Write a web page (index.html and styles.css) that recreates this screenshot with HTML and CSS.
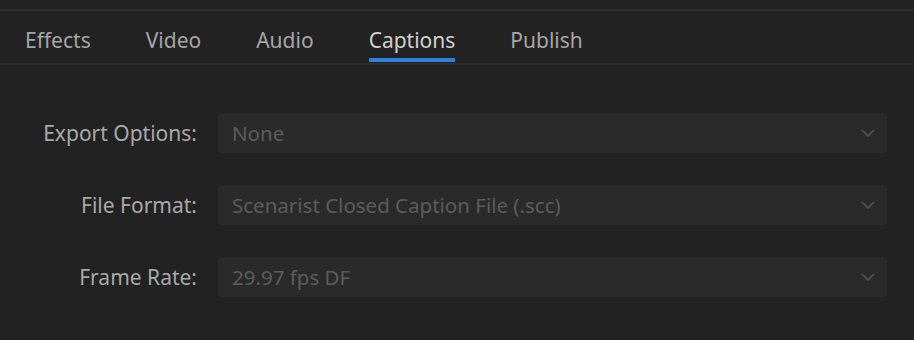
FILE: index.html
```html
<!DOCTYPE html>
<html lang="en">
<head>
    <meta charset="UTF-8">
    <title>Export Settings - Captions</title>
    <link rel="stylesheet" href="styles.css">
</head>
<body>
    <div class="panel">
        <div class="tabs">
            <div class="tab">Effects</div>
            <div class="tab">Video</div>
            <div class="tab">Audio</div>
            <div class="tab active">Captions</div>
            <div class="tab">Publish</div>
        </div>
        <div class="form">
            <div class="row">
                <label>Export Options:</label>
                <div class="select">
                    <span>None</span>
                    <svg class="chevron" width="14" height="8" viewBox="0 0 14 8"><path d="M1 1 L7 7 L13 1" fill="none" stroke="#555" stroke-width="1.6"/></svg>
                </div>
            </div>
            <div class="row">
                <label>File Format:</label>
                <div class="select">
                    <span>Scenarist Closed Caption File (.scc)</span>
                    <svg class="chevron" width="14" height="8" viewBox="0 0 14 8"><path d="M1 1 L7 7 L13 1" fill="none" stroke="#555" stroke-width="1.6"/></svg>
                </div>
            </div>
            <div class="row">
                <label>Frame Rate:</label>
                <div class="select">
                    <span>29.97 fps DF</span>
                    <svg class="chevron" width="14" height="8" viewBox="0 0 14 8"><path d="M1 1 L7 7 L13 1" fill="none" stroke="#555" stroke-width="1.6"/></svg>
                </div>
            </div>
        </div>
    </div>
</body>
</html>
```

FILE: styles.css
```css
body {
    margin: 0;
    background: #222222;
    font-family: 'Noto Sans', 'Open Sans', sans-serif;
    color: #a8a8a8;
}
.panel {
    padding-top: 9px;
}
.tabs {
    display: flex;
    gap: 55px;
    height: 52px;
    padding-left: 25px;
    border-top: 2px solid #2e2e2e;
    border-bottom: 2px solid #2e2e2e;
}
.tab {
    font-size: 21px;
    line-height: 46px;
    padding-top: 6px;
    color: #a6a6a6;
    position: relative;
}
.tab.active {
    color: #d0d0d0;
}
.tab.active::after {
    content: "";
    position: absolute;
    left: 0;
    right: 0;
    bottom: 1px;
    height: 4px;
    background: #2d7fe0;
}
.form {
    padding: 48px 27px 0 0;
    display: flex;
    flex-direction: column;
    gap: 32px;
}
.row {
    display: flex;
    align-items: center;
}
.row label {
    width: 197px;
    text-align: right;
    font-size: 21px;
    color: #a9a9a9;
    margin-right: 21px;
}
.select {
    flex: 1;
    height: 40px;
    background: #2a2a2a;
    border-radius: 4px;
    display: flex;
    align-items: center;
    justify-content: space-between;
    padding: 0 12px 0 14px;
    font-size: 20.5px;
    color: #5c5c5c;
}
.chevron {
    display: block;
}
```
